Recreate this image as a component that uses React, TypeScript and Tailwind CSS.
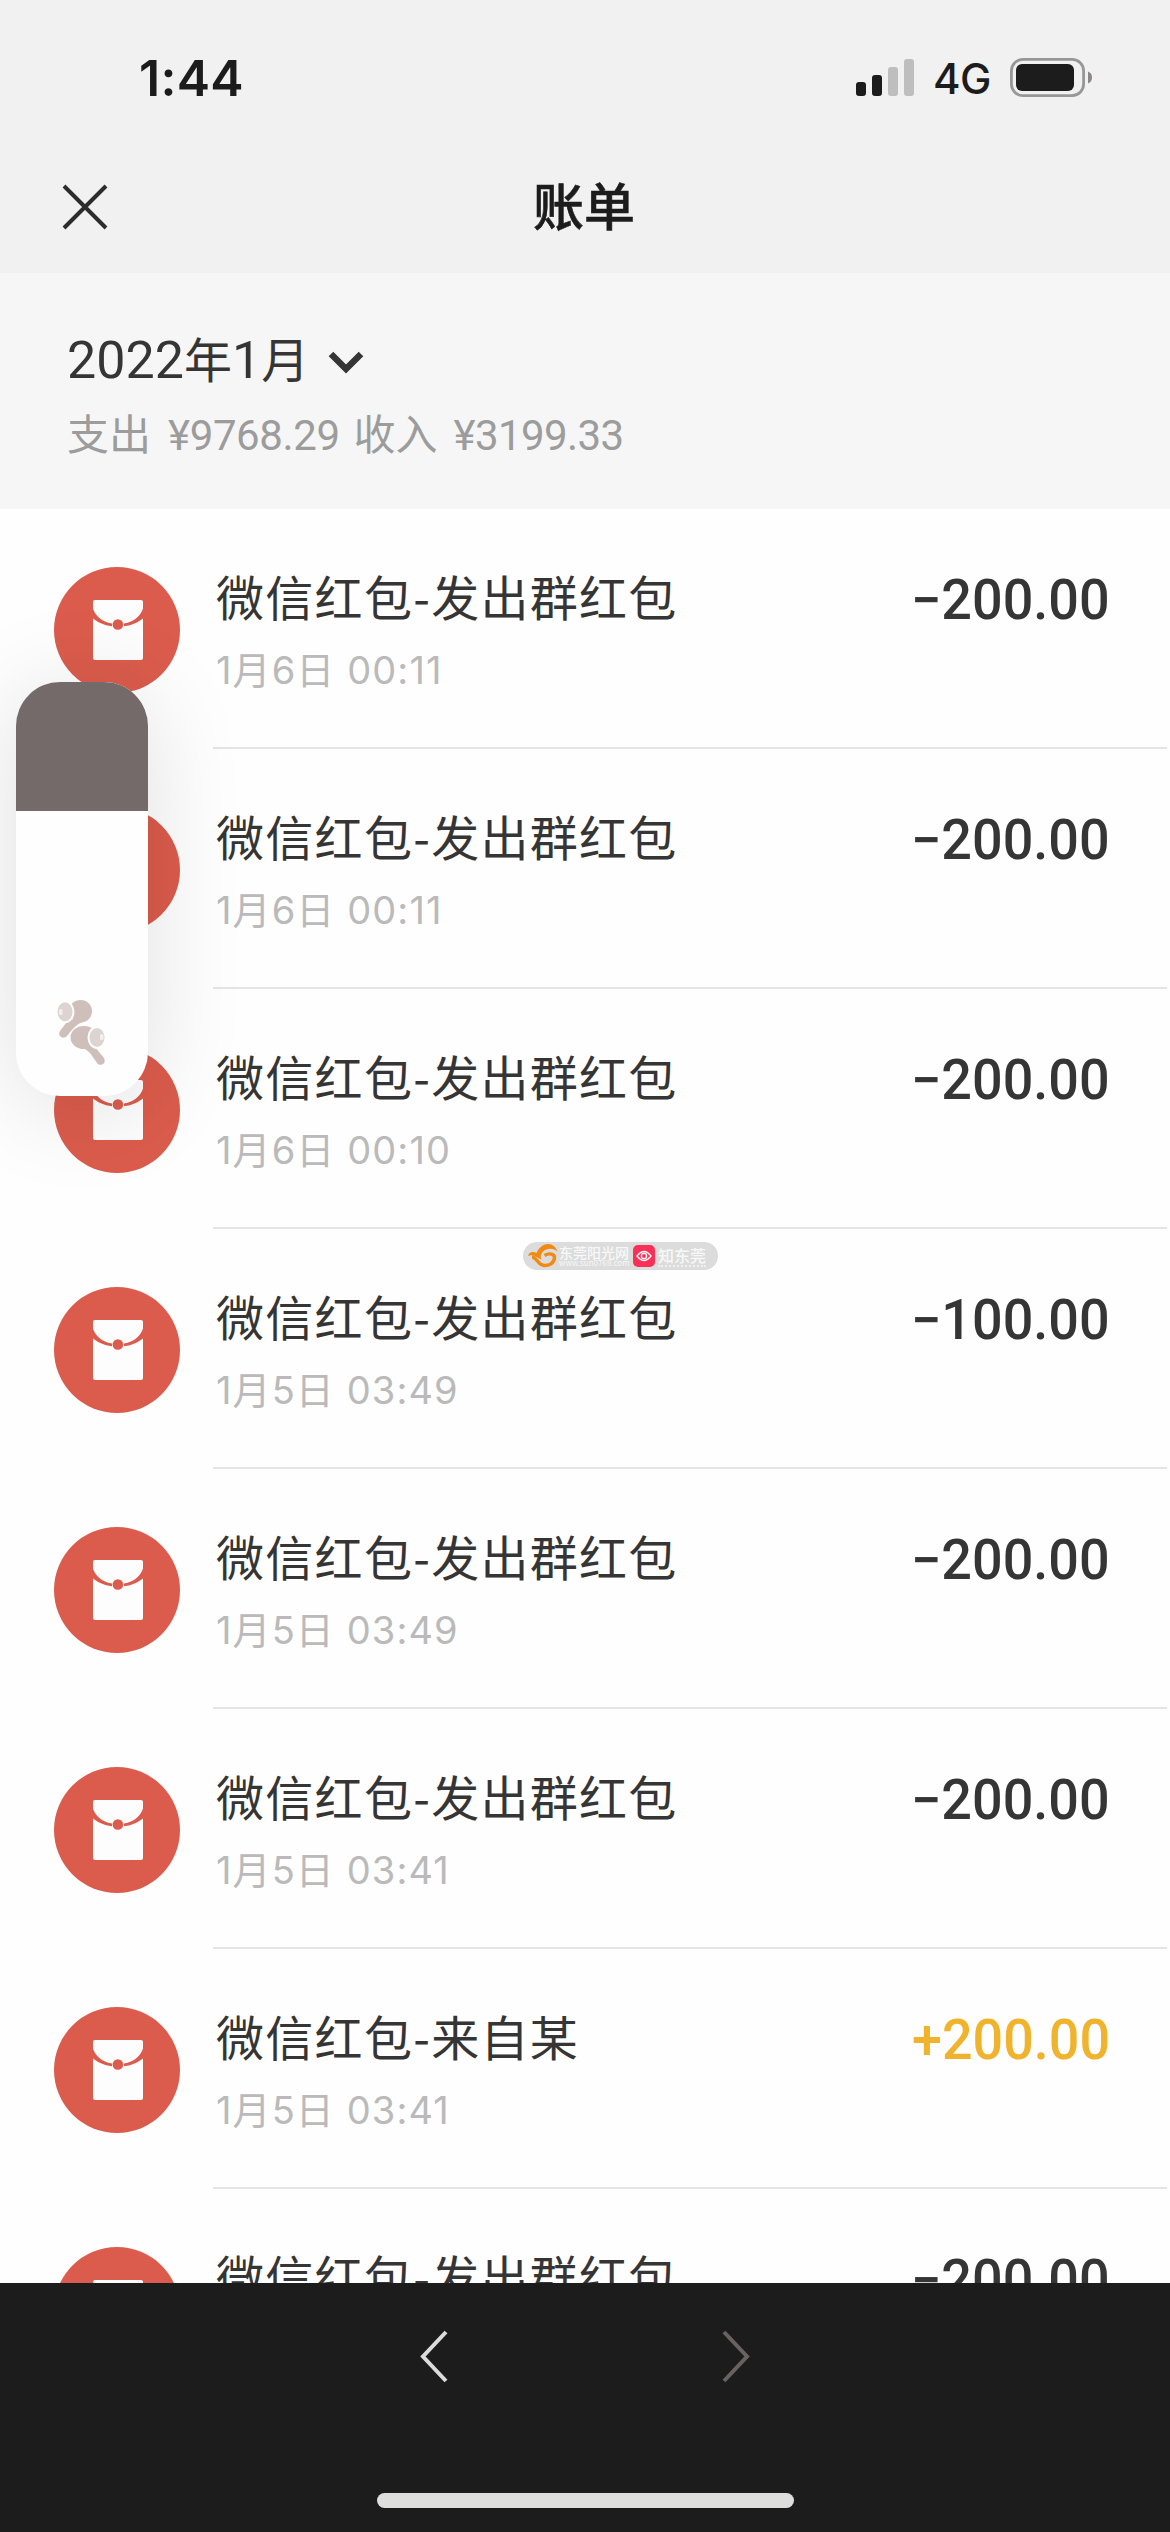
import React from "react";

const cjk = "font-['Noto_Sans_CJK_SC',sans-serif]";

type Bill = { title: string; time: string; amount: string; income?: boolean };

const bills: Bill[] = [
  { title: "微信红包-发出群红包", time: "1月6日 00:11", amount: "−200.00" },
  { title: "微信红包-发出群红包", time: "1月6日 00:11", amount: "−200.00" },
  { title: "微信红包-发出群红包", time: "1月6日 00:10", amount: "−200.00" },
  { title: "微信红包-发出群红包", time: "1月5日 03:49", amount: "−100.00" },
  { title: "微信红包-发出群红包", time: "1月5日 03:49", amount: "−200.00" },
  { title: "微信红包-发出群红包", time: "1月5日 03:41", amount: "−200.00" },
  { title: "微信红包-来自某", time: "1月5日 03:41", amount: "+200.00", income: true },
  { title: "微信红包-发出群红包", time: "1月5日 03:41", amount: "−200.00" },
];

function StatusBar() {
  return (
    <div className="flex h-[150px] items-start justify-between pl-[139px] pr-[78px] text-[#1c1c1c]">
      <span className="mt-[48px] font-['Inter',sans-serif] text-[50px] font-semibold leading-[60px] tracking-[0.3px]">1:44</span>
      <div className="mt-[57px] flex h-[42px]">
        <svg className="mt-[2px]" width="58" height="37" viewBox="0 0 58 37">
          <rect x="0" y="23" width="10" height="14" rx="3" fill="#1c1c1c" />
          <rect x="16" y="16" width="10" height="21" rx="3" fill="#1c1c1c" />
          <rect x="32" y="8" width="10" height="29" rx="3" fill="#bebebe" />
          <rect x="48" y="0" width="10" height="37" rx="3" fill="#bebebe" />
        </svg>
        <span className="ml-[19px] w-[76px] font-['Inter',sans-serif] text-[42px] font-medium leading-[44px] tracking-[-0.6px]">4G</span>
        <svg width="83" height="42" viewBox="0 0 83 42">
          <rect x="2.4" y="2.4" width="72.2" height="36.2" rx="11.5" fill="none" stroke="#979797" strokeWidth="2.8" />
          <rect x="7" y="7" width="58" height="27" rx="6" fill="#1c1c1c" />
          <path d="M79 14.5a6.5 6.5 0 0 1 0 12z" fill="#8c8787" />
        </svg>
      </div>
    </div>
  );
}

function RedPacket() {
  return (
    <svg className="shrink-0" width="126" height="126" viewBox="0 0 126 126">
      <circle cx="63" cy="63" r="63" fill="#db5c4c" />
      <rect x="39" y="33" width="50" height="60" rx="2" fill="#fdfdfd" />
      <path d="M38.500 40C41 49 48 55 58 56.600V59.200C50 58.400 43 55 38.500 51z" fill="#db5c4c" />
      <path d="M89.500 40C87 49 80 55 70 56.600V59.200C78 58.400 85 55 89.500 51z" fill="#db5c4c" />
      <circle cx="63.900" cy="57.500" r="5.300" fill="#db5c4c" />
    </svg>
  );
}

function BillRow({ bill }: { bill: Bill }) {
  return (
    <div className="flex h-[240px] shrink-0 pl-[54px]">
      <div className="pt-[58px]">
        <RedPacket />
      </div>
      <div className="ml-[33px] mr-[3px] flex flex-1 justify-between border-b-2 border-[#e4e4e4] pl-[3px] pr-[57px]">
        <div className="flex flex-col">
          <span className={`mt-[51px] text-[48px] leading-[70px] tracking-[1.3px] text-[#353535] ${cjk}`}>{bill.title}</span>
          <span className="mt-[13px] font-['Inter','Noto_Sans_CJK_SC',sans-serif] text-[38px] leading-[54px] tracking-[1.1px] text-[#bababa]">{bill.time}</span>
        </div>
        <span className={`mt-[58px] origin-right scale-x-[0.98] font-['Roboto',sans-serif] text-[55px] font-medium leading-[66px] ${bill.income ? "text-[#f0b32e]" : "text-[#353535]"}`}>
          {bill.amount}
        </span>
      </div>
    </div>
  );
}

function VolumeHud() {
  return (
    <div className="absolute left-[16px] top-[682px] flex h-[414px] w-[132px] flex-col overflow-hidden rounded-[44px] bg-[#fefefe]">
      <div className="h-[129px] shrink-0 bg-[#746a69]" />
      <svg className="ml-[41px] mt-[189px] shrink-0" width="50" height="66" viewBox="0 0 50 66">
        <g fill="#cfbfbb" stroke="none">
          <ellipse cx="23.500" cy="11.300" rx="11.500" ry="11.300" />
          <path d="M12 19l14 3c-6 2-9 5-16 14-4 4-10 0-7-5z" />
          <ellipse cx="27" cy="37.500" rx="13.500" ry="11.500" />
          <path d="M26 48l12-4c-1 4 5 8 9 14 3 6-4 9-7 5-5-7-7-12-14-15z" />
        </g>
        <ellipse cx="8" cy="11.700" rx="8.500" ry="10.500" fill="#ddd3d1" stroke="#fefefe" strokeWidth="2" />
        <ellipse cx="40" cy="37.500" rx="8.500" ry="10.500" fill="#ddd3d1" stroke="#fefefe" strokeWidth="2" />
        <rect x="2" y="9" width="3.500" height="6" rx="1.500" fill="#f2f0ef" />
        <rect x="43" y="34" width="3.500" height="6" rx="1.500" fill="#f2f0ef" />
      </svg>
    </div>
  );
}

function SourceBadge() {
  return (
    <div className="absolute left-[523px] top-[1242px] flex h-[28px] w-[195px] items-center rounded-full bg-[#dcdcdc] pl-[5px]">
      <svg width="30" height="24" viewBox="0 0 30 24">
        <path d="M0 12C1 7.500 5 7 8.500 9 10.500 4 15 0 20 0c4.500 0 8 3 9.500 7.500C25 3.500 19 4 15 7.500 12.500 10 12 13 13.500 15.500 10 14.500 8 12 5.500 11.500 3 11 1.500 11.500 0 12z" fill="#f08a12" />
        <path d="M4 13c5 0 5 7.500 12 8.500 5 .5 10-2.500 10.500-7.500.2-4-5-5.500-10-2.500" fill="none" stroke="#f08a12" strokeWidth="3.400" />
      </svg>
      <div className={`ml-px flex w-[70px] flex-col text-[#f8f8f8] ${cjk}`}>
        <span className="whitespace-nowrap text-[14px] font-medium leading-[14px]">东莞阳光网</span>
        <span className="whitespace-nowrap text-[8px] leading-[8px]">www.sun0769.com</span>
      </div>
      <svg className="ml-[4px]" width="22" height="22" viewBox="0 0 22 22">
        <rect width="22" height="22" rx="5" fill="#fa3058" />
        <path d="M4 11q7-9 14 0-7 9-14 0z" fill="none" stroke="#fff" strokeWidth="1.300" />
        <circle cx="11" cy="11" r="2.600" fill="none" stroke="#fff" strokeWidth="1.300" />
      </svg>
      <div className="ml-[3px] border-b-2 border-dotted border-[#efefef]">
        <span className={`block text-[16px] font-medium leading-[19px] text-[#f8f8f8] ${cjk}`}>知东莞</span>
      </div>
    </div>
  );
}

export default function App() {
  return (
    <div className="relative flex h-[2532px] w-[1170px] flex-col overflow-hidden bg-[#fefefe]">
      <header className="h-[273px] shrink-0 bg-[#f1f1f1]">
        <StatusBar />
        <div className="grid h-[114px] grid-cols-3 items-center px-[62px]">
          <svg width="46" height="46" viewBox="0 0 46 46">
            <path d="M2 2l42 42M44 2L2 44" stroke="#2c2c2c" strokeWidth="4" />
          </svg>
          <h1 className={`-mt-[7px] -ml-[2px] text-center text-[51px] font-medium leading-[70px] text-[#1c1c1c] [-webkit-text-stroke:0.6px_#1c1c1c] ${cjk}`}>账单</h1>
        </div>
      </header>

      <section className="flex h-[236px] shrink-0 flex-col bg-[#f6f6f6] pl-[67px]">
        <div className="mt-[51px] flex items-center text-[#353535]">
          <span className="font-['Roboto','Noto_Sans_CJK_SC',sans-serif] text-[52px] leading-[74px]">
            2022<span className="text-[48px]">年</span>1<span className="text-[48px]">月</span>
          </span>
          <svg className="ml-[19px] mt-[2px]" width="36" height="26" viewBox="0 0 36 26">
            <path d="M3 4l15 15L33 4" fill="none" stroke="#353535" strokeWidth="6.500" />
          </svg>
        </div>
        <div className="mt-[7px] flex font-['Roboto','Noto_Sans_CJK_SC',sans-serif] text-[42px] leading-[60px] text-[#9c9c9c]">
          <span className="mr-[17px]">支出</span>
          <span className="mr-[14px] tracking-[-0.4px]">¥9768.29</span>
          <span className="mr-[16px]">收入</span>
          <span className="tracking-[-0.6px]">¥3199.33</span>
        </div>
      </section>

      <main className="flex min-h-0 flex-1 flex-col overflow-hidden">
        {bills.map((bill, i) => (
          <BillRow key={i} bill={bill} />
        ))}
      </main>

      <footer className="flex h-[249px] shrink-0 flex-col items-center justify-between bg-[#1c1c1c] pb-[24px] pt-[47px]">
        <div className="flex w-[332px] justify-between">
          <svg width="30" height="54" viewBox="0 0 30 54">
            <path d="M27 2L4 26.500 27 51" fill="none" stroke="#dcdcdc" strokeWidth="4" />
          </svg>
          <svg width="30" height="54" viewBox="0 0 30 54">
            <path d="M3 2l23 24.500L3 51" fill="none" stroke="#6a6262" strokeWidth="4" />
          </svg>
        </div>
        <div className="h-[15px] w-[417px] rounded-full bg-[#dededc]" />
      </footer>

      <div className="pointer-events-none absolute left-[16px] top-[682px] h-[414px] w-[132px] rounded-[44px] shadow-[0_10px_100px_rgba(0,0,0,0.12)]" />
      <VolumeHud />
      <SourceBadge />
    </div>
  );
}
